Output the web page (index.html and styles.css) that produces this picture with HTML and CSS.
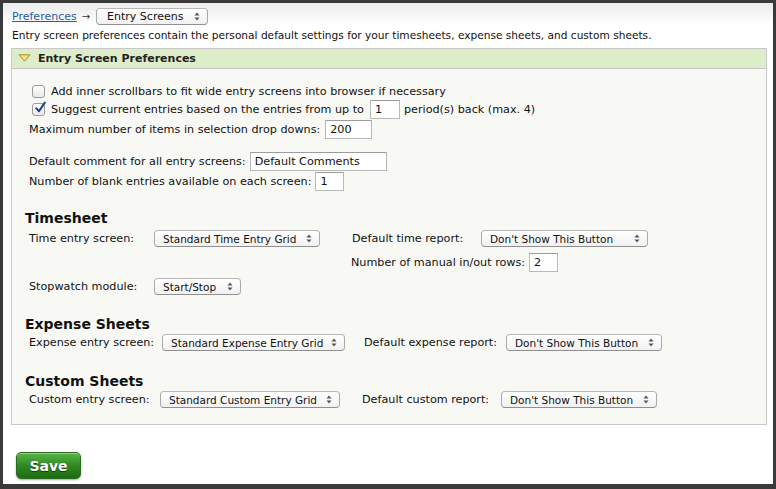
FILE: index.html
```html
<!DOCTYPE html>
<html>
<head>
<meta charset="utf-8">
<link rel="stylesheet" href="styles.css">
</head>
<body>
<div class="frame">
  <div class="crumbs">
    <a class="crumb-link" href="#">Preferences</a>
    <span class="arrow">&rarr;</span>
    <span class="sel sel-crumb"><span class="sel-text">Entry Screens</span><svg class="updown" width="6" height="9" viewBox="0 0 6 9"><path d="M3 0.5 L5.5 3.5 H0.5 Z M3 8.5 L5.5 5.5 H0.5 Z" fill="#555"/></svg></span>
  </div>
  <div class="desc">Entry screen preferences contain the personal default settings for your timesheets, expense sheets, and custom sheets.</div>

  <div class="panel">
    <div class="panel-head">
      <svg class="tri" width="13" height="8" viewBox="0 0 13 8"><path d="M1 0.8 H12 L6.5 7.2 Z" fill="#f3e46a" stroke="#9a8a25" stroke-width="0.9" stroke-linejoin="round"/></svg>
      <span class="panel-title">Entry Screen Preferences</span>
    </div>
    <div class="panel-body">
      <div class="row row-check1">
        <span class="cb"></span>
        <span>Add inner scrollbars to fit wide entry screens into browser if necessary</span>
      </div>
      <div class="row row-check2">
        <span class="cb cb-on"><svg width="14" height="14" viewBox="0 0 14 14"><path d="M3.2 7.2 L6 10.3 L11.8 1.6" fill="none" stroke="#1f3f8a" stroke-width="2" stroke-linecap="round" stroke-linejoin="round"/></svg></span>
        <span>Suggest current entries based on the entries from up to</span>
        <span class="inp inp-period">1</span>
        <span>period(s) back (max. 4)</span>
      </div>
      <div class="row row-max">
        <span>Maximum number of items in selection drop downs:</span>
        <span class="inp inp-max">200</span>
      </div>
      <div class="row row-comment">
        <span>Default comment for all entry screens:</span>
        <span class="inp inp-comment">Default Comments</span>
      </div>
      <div class="row row-blank">
        <span>Number of blank entries available on each screen:</span>
        <span class="inp inp-blank">1</span>
      </div>

      <h2 class="sect sect-time">Timesheet</h2>
      <div class="trow trow-1">
        <span class="lbl lbl-time">Time entry screen:</span>
        <span class="sel sel-time"><span class="sel-text">Standard Time Entry Grid</span><svg class="updown" width="6" height="9" viewBox="0 0 6 9"><path d="M3 0.5 L5.5 3.5 H0.5 Z M3 8.5 L5.5 5.5 H0.5 Z" fill="#555"/></svg></span>
        <span class="lbl lbl-report">Default time report:</span>
        <span class="sel sel-report"><span class="sel-text">Don't Show This Button</span><svg class="updown" width="6" height="9" viewBox="0 0 6 9"><path d="M3 0.5 L5.5 3.5 H0.5 Z M3 8.5 L5.5 5.5 H0.5 Z" fill="#555"/></svg></span>
      </div>
      <div class="trow trow-2">
        <span>Number of manual in/out rows:</span>
        <span class="inp inp-rows">2</span>
      </div>
      <div class="trow trow-3">
        <span class="lbl lbl-time">Stopwatch module:</span>
        <span class="sel sel-stop"><span class="sel-text">Start/Stop</span><svg class="updown" width="6" height="9" viewBox="0 0 6 9"><path d="M3 0.5 L5.5 3.5 H0.5 Z M3 8.5 L5.5 5.5 H0.5 Z" fill="#555"/></svg></span>
      </div>

      <h2 class="sect sect-exp">Expense Sheets</h2>
      <div class="trow">
        <span class="lbl lbl-exp">Expense entry screen:</span>
        <span class="sel sel-exp"><span class="sel-text">Standard Expense Entry Grid</span><svg class="updown" width="6" height="9" viewBox="0 0 6 9"><path d="M3 0.5 L5.5 3.5 H0.5 Z M3 8.5 L5.5 5.5 H0.5 Z" fill="#555"/></svg></span>
        <span class="lbl lbl-exprep">Default expense report:</span>
        <span class="sel sel-exprep"><span class="sel-text">Don't Show This Button</span><svg class="updown" width="6" height="9" viewBox="0 0 6 9"><path d="M3 0.5 L5.5 3.5 H0.5 Z M3 8.5 L5.5 5.5 H0.5 Z" fill="#555"/></svg></span>
      </div>

      <h2 class="sect sect-cust">Custom Sheets</h2>
      <div class="trow">
        <span class="lbl lbl-cust">Custom entry screen:</span>
        <span class="sel sel-cust"><span class="sel-text">Standard Custom Entry Grid</span><svg class="updown" width="6" height="9" viewBox="0 0 6 9"><path d="M3 0.5 L5.5 3.5 H0.5 Z M3 8.5 L5.5 5.5 H0.5 Z" fill="#555"/></svg></span>
        <span class="lbl lbl-custrep">Default custom report:</span>
        <span class="sel sel-custrep"><span class="sel-text">Don't Show This Button</span><svg class="updown" width="6" height="9" viewBox="0 0 6 9"><path d="M3 0.5 L5.5 3.5 H0.5 Z M3 8.5 L5.5 5.5 H0.5 Z" fill="#555"/></svg></span>
      </div>
    </div>
  </div>

  <div class="actions">
    <button class="save" type="button">Save</button>
  </div>
</div>
</body>
</html>
```

FILE: styles.css
```css
html, body {
  margin: 0;
  padding: 0;
}
body {
  background: #3a3a3a;
  width: 776px;
  height: 489px;
  overflow: hidden;
  font-family: "DejaVu Sans", Verdana, sans-serif;
  font-size: 11px;
  color: #111;
}
.frame {
  margin: 3px 3px 5px 3px;
  height: 481px;
  background: linear-gradient(#ebebeb, #ffffff 22px);
  padding: 0 6px 0 8px;
  box-sizing: border-box;
  overflow: hidden;
}
.crumbs {
  display: flex;
  align-items: center;
  height: 17px;
  padding-top: 5px;
  padding-left: 1px;
}
.crumb-link {
  color: #2b5a9e;
  text-decoration: underline;
}
.arrow {
  margin: 0 6px 0 5px;
  font-size: 10px;
  color: #333;
}
.sel {
  display: inline-flex;
  align-items: center;
  justify-content: space-between;
  box-sizing: border-box;
  height: 17px;
  padding: 0 7px 0 8px;
  border: 1px solid #a9a9a9;
  border-top-color: #b8b8b8;
  border-bottom-color: #8f8f8f;
  border-radius: 4px;
  background: linear-gradient(#ffffff, #f1f1f1);
  color: #111;
  font-size: 10.5px;
  white-space: nowrap;
}
.updown { flex: none; margin-left: 4px; }
.sel-crumb { width: 112px; font-size: 11px; padding-left: 10px; }
.desc {
  margin-top: 3px;
  padding-left: 1px;
  line-height: 14px;
  font-size: 10.6px;
}
.panel {
  margin-top: 6px;
  border: 1px solid #c8c8c8;
  width: 756px;
  box-sizing: border-box;
}
.panel-head {
  height: 19px;
  background: #ddedc9;
  border-bottom: 1px solid #c6c6c6;
  display: flex;
  align-items: center;
  padding-left: 6px;
}
.tri { margin-right: 7px; margin-top: -2px; }
.panel-title {
  font-weight: bold;
  font-size: 11px;
  color: #222;
}
.panel-body {
  background: #f8f9f5;
  padding: 13px 0 15px 17px;
  font-size: 11.2px;
}
.row {
  display: flex;
  align-items: center;
  height: 19px;
  white-space: nowrap;
}
.row-check1, .row-check2 { padding-left: 3px; }
.row-check1 { height: 18px; }
.row-max { margin-top: 1px; }
.row-comment { margin-top: 13px; }
.row-blank { margin-top: 1px; }
.cb {
  width: 11px;
  height: 11px;
  border: 1px solid #9a9a9a;
  border-radius: 3px;
  background: linear-gradient(#ffffff, #e8e8e8);
  margin-right: 6px;
  position: relative;
  flex: none;
}
.cb-on svg {
  position: absolute;
  left: 0;
  top: -3px;
}
.inp {
  display: inline-flex;
  align-items: center;
  box-sizing: border-box;
  height: 19px;
  background: #fff;
  border: 1px solid #b9b9b9;
  border-top-color: #9c9c9c;
  padding-left: 4px;
  margin-left: 4px;
  margin-right: 4px;
}
.inp-period { width: 30px; margin-left: 6px; }
.inp-max { width: 47px; margin-left: 5px; }
.inp-comment { width: 137px; margin-left: 4px; }
.inp-blank { width: 29px; margin-left: 4px; }
.sect {
  font-size: 14px;
  font-weight: bold;
  margin: 0;
  margin-left: -4px;
  line-height: 18px;
  color: #111;
}
.sect-time { margin-top: 18px; }
.sect-exp { margin-top: 19px; }
.sect-cust { margin-top: 20px; }
.trow {
  display: flex;
  align-items: center;
  height: 19px;
  white-space: nowrap;
}
.trow-1 { margin-top: 2px; }
.trow-2 { padding-left: 322px; margin-top: 5px; }
.trow-2 .inp { margin-left: 4px; }
.trow-3 { margin-top: 5px; }
.lbl-time { width: 125px; }
.sel-time { width: 166px; }
.lbl-report { margin-left: 32px; width: 129px; }
.sel-report { width: 167px; }
.inp-rows { width: 29px; }
.sel-stop { width: 87px; }
.lbl-exp { width: 133px; }
.sel-exp { width: 183px; }
.lbl-exprep { margin-left: 19px; width: 142px; }
.sel-exprep { width: 156px; }
.lbl-cust { width: 131px; }
.sel-cust { width: 180px; }
.lbl-custrep { margin-left: 22px; width: 139px; }
.sel-custrep { width: 156px; }
.actions {
  padding-top: 27px;
  padding-left: 5px;
}
.save {
  width: 65px;
  height: 27px;
  border-radius: 5px;
  border: 1px solid #2b6b20;
  background: linear-gradient(#5bb548, #2f8a22 50%, #1d6c13);
  box-shadow: 0 1px 2px rgba(0,0,0,0.35), inset 0 1px 0 rgba(255,255,255,0.35);
  color: #fff;
  font-family: "DejaVu Sans", Verdana, sans-serif;
  font-weight: bold;
  font-size: 14px;
  text-shadow: 0 1px 1px rgba(0,0,0,0.6);
  padding: 0;
}
```
